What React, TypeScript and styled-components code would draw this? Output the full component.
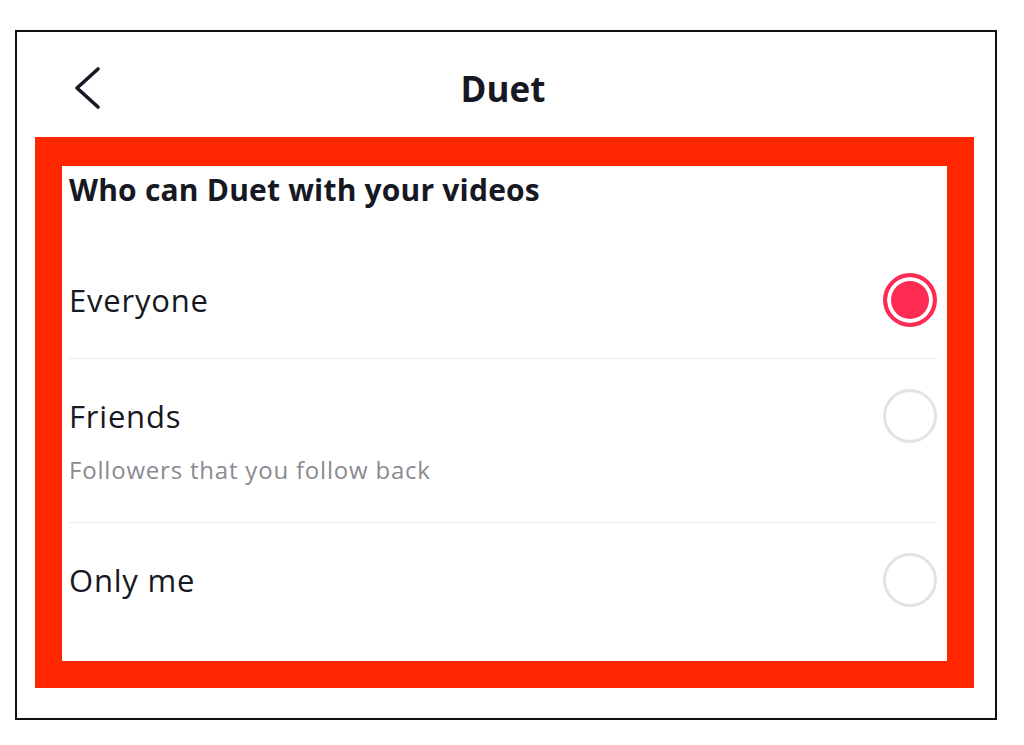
import React from 'react'
import styled, { createGlobalStyle } from 'styled-components'

const GlobalStyle = createGlobalStyle`
  html, body {
    margin: 0;
    padding: 0;
    background: #ffffff;
  }
  body {
    font-family: 'Open Sans', 'Liberation Sans', sans-serif;
    color: #161823;
  }
`

const OPTIONS = [
  { label: 'Everyone', selected: true },
  { label: 'Friends', hint: 'Followers that you follow back' },
  { label: 'Only me' },
]

const Page = styled.div`
  padding: 30px 0 0 15px;
`

const Frame = styled.div`
  width: 982px;
  height: 690px;
  box-sizing: border-box;
  border: 2px solid #111111;
  display: flex;
  flex-direction: column;
`

const Header = styled.header`
  height: 105px;
  box-sizing: border-box;
  display: grid;
  grid-template-columns: 1fr auto 1fr;
  align-items: center;
  padding: 7px 62px 0 56px;
`

const BackButton = styled.button`
  border: 0;
  background: none;
  padding: 0;
  width: 30px;
  height: 44px;
  display: flex;
  align-items: center;
  cursor: pointer;
`

const Title = styled.h1`
  margin: 0;
  text-align: center;
  font-size: 35px;
  font-weight: 700;
  color: #161823;
`

const Highlight = styled.section`
  margin: 0 21px 0 18px;
  height: 551px;
  box-sizing: border-box;
  border: 27px solid #ff2600;
  border-top-width: 29px;
  background: #ffffff;
  padding: 0 10px 0 7px;
`

const SectionTitle = styled.h2`
  margin: 0;
  height: 48px;
  line-height: 48px;
  font-size: 30px;
  letter-spacing: 0.2px;
  font-weight: 700;
  color: #161823;
`

const List = styled.ul`
  list-style: none;
  margin: 29px 0 0;
  padding: 0;
`

const Option = styled.li<{ $last?: boolean; $hint?: boolean }>`
  padding: 30px 0 ${(p) => (p.$hint ? '38px' : '31px')};
  border-bottom: ${(p) => (p.$last ? 'none' : '1.5px solid #ececec')};
`

const OptionLine = styled.div`
  display: flex;
  align-items: center;
  justify-content: space-between;
  height: 54px;
`

const OptionLabel = styled.span`
  font-size: 31px;
  letter-spacing: 0.8px;
  color: #161823;
`

const Hint = styled.div`
  margin-top: 13px;
  line-height: 28px;
  font-size: 24px;
  letter-spacing: 0.8px;
  color: #8a8b91;
`

const Radio = styled.span<{ $on?: boolean }>`
  width: 54px;
  height: 54px;
  box-sizing: border-box;
  border-radius: 50%;
  border: ${(p) => (p.$on ? '4px solid #fe2c55' : '3px solid #e3e3e3')};
  background: ${(p) => (p.$on ? '#fe2c55' : '#ffffff')};
  box-shadow: ${(p) => (p.$on ? 'inset 0 0 0 4px #ffffff' : 'none')};
`

const Chevron = () => (
  <svg width="30" height="44" viewBox="0 0 30 44" fill="none">
    <path d="M25 3 L4 22 L25 41" stroke="#161823" strokeWidth="3.6" strokeLinecap="round" strokeLinejoin="round" />
  </svg>
)

export default function App() {
  return (
    <>
      <GlobalStyle />
      <Page>
        <Frame>
          <Header>
            <BackButton aria-label="Back">
              <Chevron />
            </BackButton>
            <Title>Duet</Title>
            <span />
          </Header>
          <Highlight>
            <SectionTitle>Who can Duet with your videos</SectionTitle>
            <List>
              {OPTIONS.map((o, i) => (
                <Option key={o.label} $last={i === OPTIONS.length - 1} $hint={!!o.hint}>
                  <OptionLine>
                    <OptionLabel>{o.label}</OptionLabel>
                    <Radio $on={o.selected} />
                  </OptionLine>
                  {o.hint && <Hint>{o.hint}</Hint>}
                </Option>
              ))}
            </List>
          </Highlight>
        </Frame>
      </Page>
    </>
  )
}
